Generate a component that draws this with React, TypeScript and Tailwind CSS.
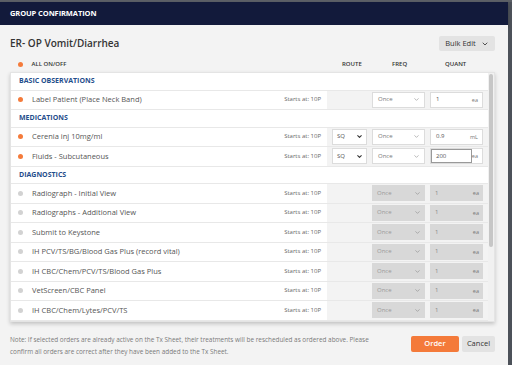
import React from 'react';
import { ChevronDown } from 'lucide-react';

type Item = {
  name: string;
  active: boolean;
  route?: string;
  freq: string;
  quant: string;
  unit: string;
  focused?: boolean;
};

type Section = { title: string; items: Item[] };

const sections: Section[] = [
  {
    title: 'BASIC OBSERVATIONS',
    items: [{ name: 'Label Patient (Place Neck Band)', active: true, freq: 'Once', quant: '1', unit: 'ea' }],
  },
  {
    title: 'MEDICATIONS',
    items: [
      { name: 'Cerenia inj 10mg/ml', active: true, route: 'SQ', freq: 'Once', quant: '0.9', unit: 'mL' },
      { name: 'Fluids - Subcutaneous', active: true, route: 'SQ', freq: 'Once', quant: '200', unit: 'ea', focused: true },
    ],
  },
  {
    title: 'DIAGNOSTICS',
    items: [
      'Radiograph - Initial View',
      'Radiographs - Additional View',
      'Submit to Keystone',
      'IH PCV/TS/BG/Blood Gas Plus (record vital)',
      'IH CBC/Chem/PCV/TS/Blood Gas Plus',
      'VetScreen/CBC Panel',
      'IH CBC/Chem/Lytes/PCV/TS',
    ].map((name) => ({ name, active: false, freq: 'Once', quant: '1', unit: 'ea' })),
  },
];

const OrderRow: React.FC<{ item: Item }> = ({ item }) => {
  const on = item.active;
  return (
    <div className="flex h-[19.5px] shrink-0 items-stretch border-b border-[#e8e8e8]">
      <div className="flex flex-1 items-center pl-[7px]">
        <span className={`h-[5px] w-[5px] rounded-full ${on ? 'bg-[#f47b3b]' : 'bg-[#d2d2d2]'}`} />
        <span className="ml-[9px] text-[7.5px] text-[#555]">{item.name}</span>
        <span className="ml-auto mr-[6px] text-[6px] text-[#666]">Starts at: 10P</span>
      </div>
      <div className="flex w-[161px] items-center gap-[5px] bg-[#f3f3f3] px-[5px]">
        {item.route ? (
          <div className="flex h-[16px] w-[35px] items-center justify-between border border-[#dcdcdc] bg-white pl-[4px] pr-[3px] text-[6px] text-[#555]">
            {item.route}
            <ChevronDown size={7} strokeWidth={3.5} className="text-[#333]" />
          </div>
        ) : (
          <div className="w-[35px]" />
        )}
        <div
          className={`flex h-[16px] w-[53px] items-center justify-between pl-[5px] pr-[4px] text-[6px] ${
            on ? 'border border-[#dcdcdc] bg-white text-[#777]' : 'bg-[#d8d8d8] text-[#999]'
          }`}
        >
          {item.freq}
          <ChevronDown size={7} strokeWidth={2} className="text-[#888]" />
        </div>
        <div
          className={`flex h-[16px] w-[53px] items-center justify-between pr-[4px] text-[6px] ${
            on ? 'border border-[#dcdcdc] bg-white text-[#555]' : 'bg-[#d8d8d8] pl-[5px] text-[#888]'
          }`}
        >
          {item.focused ? (
            <span className="flex h-full w-[42px] items-center border border-[#999] pl-[4px]">{item.quant}</span>
          ) : (
            <span className={on ? 'pl-[5px]' : ''}>{item.quant}</span>
          )}
          <span className="text-[5.5px] text-[#777]">{item.unit}</span>
        </div>
      </div>
    </div>
  );
};

// next row, only its top edge shows above the card's bottom
const PeekRow: React.FC = () => (
  <div className="flex h-[19.5px] shrink-0 items-stretch">
    <div className="flex flex-1 items-center pl-[7px]" />
    <div className="flex w-[161px] items-center gap-[5px] bg-[#f3f3f3] px-[5px]">
      <div className="w-[35px]" />
      <div className="h-[16px] w-[53px] bg-[#d8d8d8]" />
      <div className="h-[16px] w-[53px] bg-[#d8d8d8]" />
    </div>
  </div>
);

export default function App() {
  return (
    <div className="flex h-[365px] w-[512px] flex-col overflow-hidden bg-[#4c5159] font-['Open_Sans',sans-serif]">
      <div className="h-[2px] shrink-0 bg-[#5b5f66]" />
      <div className="flex w-[508px] flex-1 flex-col">
        <div className="flex h-[23px] shrink-0 items-center bg-[#121a3b] px-[10px] shadow-[0_2px_3px_rgba(0,0,0,0.25)]">
          <span className="text-[7.5px] font-bold tracking-[-0.1px] text-white">GROUP CONFIRMATION</span>
        </div>

        <div className="flex flex-1 flex-col bg-[#f3f3f3] pl-[10px] pr-[13px]">
          <div className="mt-[11px] flex h-[15px] items-center justify-between">
            <h1 className="text-[10px] font-semibold text-[#333]">ER- OP Vomit/Diarrhea</h1>
            <button className="flex h-[15px] w-[56px] items-center justify-center gap-[5px] rounded-[2px] bg-[#e3e3e3] text-[7.5px] text-[#333]">
              Bulk Edit
              <ChevronDown size={8} strokeWidth={2.5} />
            </button>
          </div>

          <div className="mt-[6px] flex h-[14px] items-center text-[6px] font-semibold text-[#333]">
            <span className="ml-[7.5px] h-[5px] w-[5px] rounded-full bg-[#f47b3b]" />
            <span className="ml-[9px]">ALL ON/OFF</span>
            <span className="ml-auto w-[50px]">ROUTE</span>
            <span className="w-[53px]">FREQ</span>
            <span className="w-[50px]">QUANT</span>
          </div>

          <div className="mt-[1px] flex h-[250px] overflow-hidden border border-[#e4e4e4] bg-white shadow-[0_2px_4px_rgba(0,0,0,0.2)]">
            <div className="flex flex-1 flex-col overflow-hidden">
              {sections.map((s) => (
                <React.Fragment key={s.title}>
                  <div className="flex h-[17.5px] shrink-0 items-center border-b border-[#e8e8e8] pl-[8px] text-[7px] font-bold text-[#1f4e8c]">
                    {s.title}
                  </div>
                  {s.items.map((it) => (
                    <OrderRow key={it.name} item={it} />
                  ))}
                </React.Fragment>
              ))}
              <PeekRow />
            </div>
            <div className="flex w-[6px] flex-col bg-[#f1f1f1] px-[1px] pt-[1px]">
              <div className="h-[173px] rounded-[2px] bg-[#c6c6c6]" />
            </div>
          </div>

          <div className="mt-[12px] flex items-start justify-between">
            <p className="text-[6.4px] leading-[12px] text-[#7a7a7a]">
              Note: If selected orders are already active on the Tx Sheet, their treatments will be rescheduled as ordered above. Please
              <br />
              confirm all orders are correct after they have been added to the Tx Sheet.
            </p>
            <div className="mt-[2px] flex gap-[3px]">
              <button className="h-[16px] w-[48px] rounded-[2px] bg-[#f47a3a] text-[7.5px] font-semibold text-white">Order</button>
              <button className="h-[16px] w-[33px] rounded-[2px] bg-[#e3e3e3] text-[7.5px] text-[#333]">Cancel</button>
            </div>
          </div>
        </div>
      </div>
    </div>
  );
}
